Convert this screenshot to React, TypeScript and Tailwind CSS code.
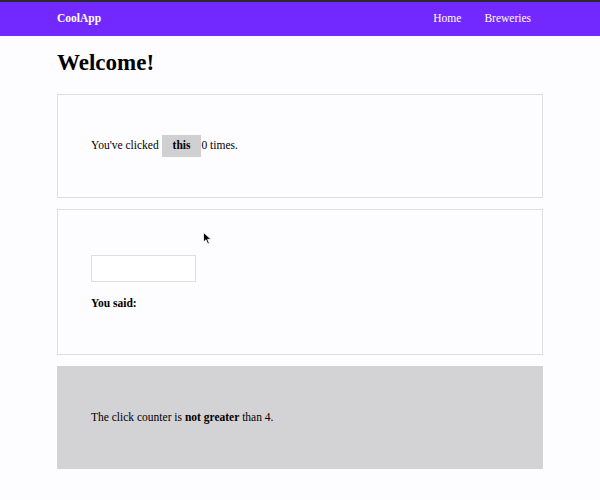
import React from "react";

const Cursor = () => (
  <svg
    className="absolute left-[203px] top-[232px]"
    width="9"
    height="13"
    viewBox="0 0 9 13"
  >
    <path d="M0.5 0.5 L0.5 10 L3 7.8 L4.8 12 L6.3 11.3 L4.6 7.3 L8 7.3 Z" fill="#000" stroke="#fff" strokeWidth="0.8" />
  </svg>
);

const App: React.FC = () => {
  const [count, setCount] = React.useState(0);
  const [text, setText] = React.useState("");

  return (
    <div className="relative min-h-[500px] bg-[#fdfcfe] font-['Liberation_Serif',serif] text-[11.5px] text-black">
      <div className="h-[2px] bg-[#2a2a2a]" />
      <nav className="flex h-[34px] items-center justify-between bg-[#7229ff] pl-[57px] pr-[69px] text-white">
        <span className="font-bold">CoolApp</span>
        <div className="flex gap-[23px]">
          <a>Home</a>
          <a>Breweries</a>
        </div>
      </nav>

      <main className="mx-[57px] pb-8">
        <h1 className="mt-[12px] mb-[16px] text-[23px] font-bold leading-[30px]">
          Welcome!
        </h1>

        <div className="flex h-[104px] items-center border border-[#dedde0] px-[33px]">
          <p>
            You've clicked{" "}
            <button
              onClick={() => setCount(count + 1)}
              className="bg-[#d0cfd1] px-[11px] py-[2px] font-bold"
            >
              this
            </button>
            {count} times.
          </p>
        </div>

        <div className="mt-[11px] flex h-[146px] flex-col justify-center border border-[#dedde0] px-[33px]">
          <input
            value={text}
            onChange={(e) => setText(e.target.value)}
            className="mt-[4px] h-[27px] w-[105px] border border-[#dedde0] bg-white px-1"
          />
          <p className="mt-[13px] font-bold">You said: {text}</p>
        </div>

        <div className="mt-[11px] flex h-[103px] items-center bg-[#d3d2d5] px-[34px]">
          <p>
            The click counter is <b>{count > 4 ? "greater" : "not greater"}</b> than 4.
          </p>
        </div>
      </main>
      <Cursor />
    </div>
  );
};

export default App;
